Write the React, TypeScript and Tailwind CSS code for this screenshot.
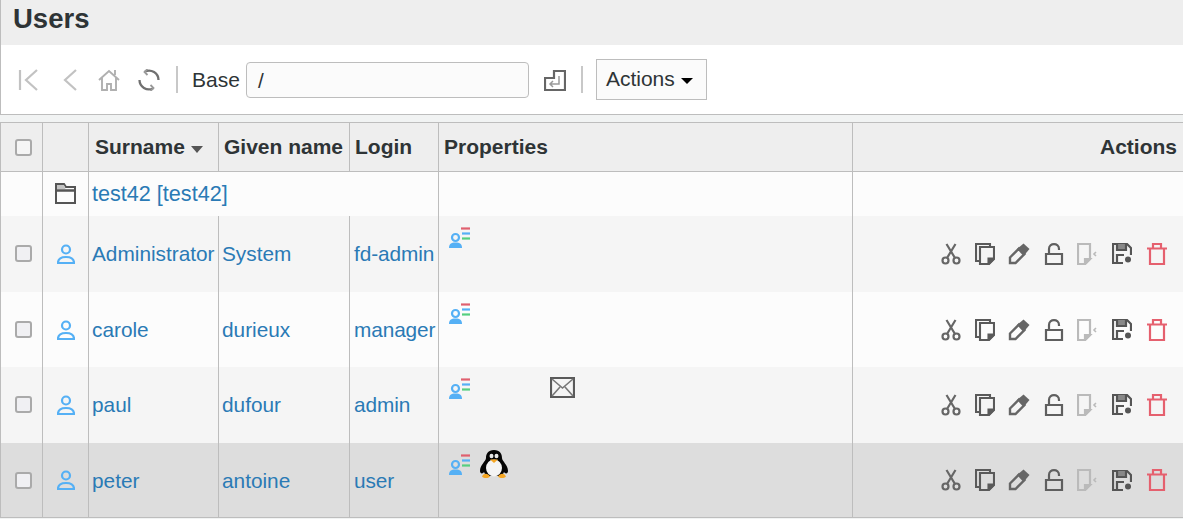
import React from "react";

const linkCls = "text-[#2a7ab5]";

type User = { surname: string; given: string; login: string; mail?: boolean; tux?: boolean; bg: string; h: string; nudge?: boolean };

const users: User[] = [
  { surname: "Administrator", given: "System", login: "fd-admin", bg: "bg-[#f5f5f5]", h: "h-[76px]" },
  { surname: "carole", given: "durieux", login: "manager", bg: "bg-[#fcfcfc]", h: "h-[75px]", nudge: true },
  { surname: "paul", given: "dufour", login: "admin", mail: true, bg: "bg-[#f5f5f5]", h: "h-[76px]" },
  { surname: "peter", given: "antoine", login: "user", tux: true, bg: "bg-[#dddddd]", h: "h-[75px]", nudge: true },
];

const FirstIcon = () => (
  <svg width="22" height="24" viewBox="0 0 22 24" fill="none" stroke="#c2c2c2" strokeWidth="2.2">
    <path d="M2 2v20M19 2 8 12l11 10" />
  </svg>
);
const PrevIcon = () => (
  <svg width="16" height="24" viewBox="0 0 16 24" fill="none" stroke="#c2c2c2" strokeWidth="2.2">
    <path d="M14 2 3 12l11 10" />
  </svg>
);
const HomeIcon = () => (
  <svg width="22" height="22" viewBox="0 0 22 22" fill="none" stroke="#b0b0b0" strokeWidth="1.9">
    <path d="M1 11 11 2l10 9M4 9v12h5v-6h4v6h5V9M17 1v5" />
  </svg>
);
const ReloadIcon = () => (
  <svg width="22" height="22" viewBox="0 0 22 22" fill="none" stroke="#707070" strokeWidth="2.300">
    <path d="M7 2.500A9.500 9.500 0 0 1 20.500 11" />
    <path d="M15 19.500A9.500 9.500 0 0 1 1.500 11" />
    <path d="M9.500 0 6.500 3l3 3M12.500 16l3 3-3 3" stroke="#999999" strokeWidth="1.800" />
  </svg>
);
const SubmitIcon = () => (
  <svg width="22" height="22" viewBox="0 0 22 22" fill="none" stroke="#666666" strokeWidth="2.2">
    <path d="M10 2h11v19H1V9h9z" />
    <path d="M15 7v8H6M9 12l-3 3 3 3" stroke="#9a9a9a" strokeWidth="1.5" />
  </svg>
);
const FolderIcon = () => (
  <svg width="21" height="21" viewBox="0 0 21 21" fill="none" stroke="#555555" strokeWidth="2">
    <path d="M1 20V1h8l2 3h9v16z" />
    <path d="M1 7.500h19" strokeWidth="2.500" />
    <path d="M2 2h7l1.500 4H2z" fill="#c4c4c4" stroke="none" />
  </svg>
);
const UserIcon = () => (
  <svg width="18" height="20" viewBox="0 0 18 20" fill="none" stroke="#55b0f5" strokeWidth="2.2">
    <circle cx="9" cy="5.500" r="4" />
    <path d="M1 19c0-4 3-6 8-6s8 2 8 6z" />
  </svg>
);
const PropsIcon = () => (
  <svg width="22" height="21" viewBox="0 0 22 21" fill="none">
    <circle cx="6.500" cy="10.500" r="3.500" stroke="#55b0f5" strokeWidth="2.2" />
    <path d="M0 21c0-4 2-5.500 6.500-5.500S13 17 13 21z" fill="#55b0f5" />
    <path d="M12 1.500h9" stroke="#e0606f" strokeWidth="2.200" />
    <path d="M13 6.500h8" stroke="#55b0f5" strokeWidth="2.200" />
    <path d="M13 11.500h8" stroke="#55cf80" strokeWidth="2.200" />
  </svg>
);
const MailIcon = () => (
  <svg width="25" height="21" viewBox="0 0 25 21" fill="none" stroke="#5a5a5a" strokeWidth="2.2">
    <path d="M1 1h23v19H1z" />
    <path d="m2 2 10.500 9L23 2M2 19l8-9M23 19l-8-9" strokeWidth="1.600" stroke="#777777" />
  </svg>
);
const TuxIcon = () => (
  <svg width="30" height="29" viewBox="0 0 30 29">
    <path d="M15 0c-6 0-8 4-8 8 0 3-6 7-6 13 0 3 3 3 4 1l2 4h16l2-4c1 2 4 2 4-1 0-6-6-10-6-13 0-4-2-8-8-8z" fill="#050505" />
    <ellipse cx="15" cy="18" rx="8" ry="8.500" fill="#f4f4f4" />
    <ellipse cx="12.500" cy="6" rx="2" ry="2.300" fill="#e8e8e8" />
    <ellipse cx="17.500" cy="6" rx="2" ry="2.300" fill="#e8e8e8" />
    <path d="M11 9.500h8L15 13z" fill="#f5a623" />
    <path d="M3 26.500c2-4 6-3 8 0-2 2-6 2-8 0zM19 26.500c2-3 6-4 8 0-2 2-6 2-8 0z" fill="#f5a623" />
  </svg>
);

const CutIcon = () => (
  <svg width="20" height="22" viewBox="0 0 20 22" fill="none" stroke="#666666" strokeWidth="2.200">
    <circle cx="4.500" cy="17.500" r="3" />
    <circle cx="15.500" cy="17.500" r="3" />
    <path d="M6 15 14.500 1M14 15 5.500 1" />
  </svg>
);
const CopyIcon = () => (
  <svg width="20" height="22" viewBox="0 0 20 22" fill="none" stroke="#5a5a5a" strokeWidth="2.100">
    <path d="M4 18H1V1h14v3" />
    <path d="M5 4h14v12l-5 5H5z" />
    <path d="M13.500 21v-5.500H19z" fill="#5a5a5a" />
  </svg>
);
const EditIcon = () => (
  <svg width="22" height="22" viewBox="0 0 22 22" fill="none">
    <path d="m2 14.500 9-9 5.500 5.500-9 9H2z" stroke="#666666" strokeWidth="2.400" />
    <path d="m9 6 6.500-5.500L21.500 6 15.500 13z" fill="#666666" />
  </svg>
);
const LockIcon = () => (
  <svg width="20" height="22" viewBox="0 0 20 22" fill="none" stroke="#5f5f5f" strokeWidth="2.200">
    <path d="M2 11h16v10H2zM5 11V6c0-6.500 10-6.500 10 0v1" />
  </svg>
);
const SnapshotIcon = () => (
  <svg width="21" height="22" viewBox="0 0 21 22" fill="none" stroke="#bababa" strokeWidth="2.200">
    <path d="M1 1h12v15l-5 5H1z" />
    <path d="M8 21v-5h5z" fill="#bababa" />
    <path d="m19 9-2 2 2 2" strokeWidth="1.600" />
  </svg>
);
const SaveIcon = () => (
  <svg width="20" height="21" viewBox="0 0 20 21" fill="none" stroke="#555555" strokeWidth="2.200">
    <path d="M11 20H1V1h14l4 4v7" />
    <path d="M5 1v6h9V1" fill="#888888" />
    <path d="M5 20v-8h7" />
    <circle cx="16" cy="16.500" r="3" fill="#555555" stroke="none" />
  </svg>
);
const TrashIcon = () => (
  <svg width="22" height="22" viewBox="0 0 22 22" fill="none" stroke="#e5606e" strokeWidth="2.200">
    <path d="M1 5.500h20M7 5V1h8v4M4 5v16h14V5" />
  </svg>
);

const Checkbox = ({ bare }: { bare?: boolean }) => (
  <span className={`block w-[17px] h-[17px] rounded-[3px] border-2 border-[#aaaaaa] ${bare ? "bg-[#f5f5f5]" : "bg-[#f0f0f3]"}`} />
);

const cellLine = "border-r border-[#bdbdbd]";

function Row({ u }: { u: User }) {
  const pad = u.nudge ? "pt-[1px]" : "";
  return (
    <tr className={`${u.bg} ${u.h} border-l border-[#bdbdbd]`}>
      <td className={`${cellLine} ${pad}`}>
        <div className="flex justify-center pl-[4px]"><Checkbox /></div>
      </td>
      <td className={`${cellLine} ${pad}`}>
        <div className="flex justify-center"><UserIcon /></div>
      </td>
      <td className={`${cellLine} ${linkCls} ${pad} pl-[3px] whitespace-nowrap`}>{u.surname}</td>
      <td className={`${cellLine} ${linkCls} ${pad} pl-[3px] whitespace-nowrap`}>{u.given}</td>
      <td className={`${cellLine} ${linkCls} ${pad} pl-[4px] whitespace-nowrap tracking-[-0.1px]`}>{u.login}</td>
      <td className={`${cellLine} align-top pt-[11px] pl-[10px]`}>
        <div className="flex items-start h-[32px]">
          <PropsIcon />
          {u.tux && <span className="ml-[8px] -mt-[4px]"><TuxIcon /></span>}
          {u.mail && <span className="ml-[79px] -mt-[1px]"><MailIcon /></span>}
        </div>
      </td>
      <td className={`pr-[15px] ${pad}`}>
        <div className="flex justify-end items-center">
          <span className="w-[34.200px] flex justify-center"><CutIcon /></span>
          <span className="w-[34.200px] flex justify-center"><CopyIcon /></span>
          <span className="w-[34.200px] flex justify-center"><EditIcon /></span>
          <span className="w-[34.200px] flex justify-center"><LockIcon /></span>
          <span className="w-[34.200px] flex justify-center"><SnapshotIcon /></span>
          <span className="w-[34.200px] flex justify-center"><SaveIcon /></span>
          <span className="w-[29px] flex justify-end"><TrashIcon /></span>
        </div>
      </td>
    </tr>
  );
}

export default function App() {
  return (
    <div className="w-[1183px] h-[519px] overflow-hidden bg-[#f1f3f3] text-[20.800px] text-[#2e3436] font-['Liberation_Sans',Arial,sans-serif]">
      <div className="h-[115px] border-l border-b border-[#bdbdbd] bg-white">
        <div className="h-[45px] bg-[#eeeeee] pl-[12px] text-[27.500px] font-bold leading-[38px]">Users</div>
        <div className="h-[69px] flex items-center pl-[17px]">
          <FirstIcon />
          <span className="ml-[22px]"><PrevIcon /></span>
          <span className="ml-[20px]"><HomeIcon /></span>
          <span className="ml-[18px]"><ReloadIcon /></span>
          <span className="ml-[16px] w-[2px] h-[27px] bg-[#c8c8c8]" />
          <span className="ml-[14px] text-[21px]">Base</span>
          <div className="ml-[6px] w-[283px] h-[36px] rounded-[4px] border border-[#bdbdbd] bg-[#fbfbfb] pl-[11px] leading-[35px]">/</div>
          <span className="ml-[15px]"><SubmitIcon /></span>
          <span className="ml-[15px] w-[2px] h-[27px] bg-[#c8c8c8]" />
          <div className="ml-[13px] w-[111px] h-[41px] border border-[#bdbdbd] bg-[#fbfbfb] flex items-center pl-[9px] pb-[2px] text-[21px]">
            Actions
            <span className="ml-[6px] mt-[4px] w-0 h-0 border-x-[6.500px] border-x-transparent border-t-[6.500px] border-t-black" />
          </div>
        </div>
      </div>

      <table className="mt-[7px] w-[1183px] table-fixed border-collapse border-t border-b border-[#bdbdbd]">
        <colgroup>
          <col className="w-[42px]" />
          <col className="w-[46px]" />
          <col className="w-[130px]" />
          <col className="w-[131px]" />
          <col className="w-[89px]" />
          <col className="w-[414px]" />
          <col />
        </colgroup>
        <thead>
          <tr className="h-[49px] bg-[#eeeeee] font-bold text-[21px] border-l border-b border-[#bdbdbd] text-left">
            <th className={cellLine}>
              <div className="flex justify-center pl-[4px]"><Checkbox bare /></div>
            </th>
            <th className={cellLine} />
            <th className={`${cellLine} pl-[6px] whitespace-nowrap`}>
              Surname
              <span className="inline-block ml-[6px] align-[1px] w-0 h-0 border-x-[6.500px] border-x-transparent border-t-[7px] border-t-[#555555]" />
            </th>
            <th className={`${cellLine} pl-[5px] whitespace-nowrap`}>Given name</th>
            <th className={`${cellLine} pl-[5px]`}>Login</th>
            <th className={`${cellLine} pl-[5px]`}>Properties</th>
            <th className="pr-[6px] text-right">Actions</th>
          </tr>
        </thead>
        <tbody>
          <tr className="h-[44px] bg-[#fcfcfc] border-l border-[#bdbdbd]">
            <td className={cellLine} />
            <td className={cellLine}>
              <div className="flex justify-center"><FolderIcon /></div>
            </td>
            <td colSpan={3} className={`${cellLine} ${linkCls} pl-[3px] text-[21.600px]`}>test42 [test42]</td>
            <td className={cellLine} />
            <td />
          </tr>
          {users.map((u) => (
            <Row key={u.surname} u={u} />
          ))}
        </tbody>
      </table>
    </div>
  );
}
